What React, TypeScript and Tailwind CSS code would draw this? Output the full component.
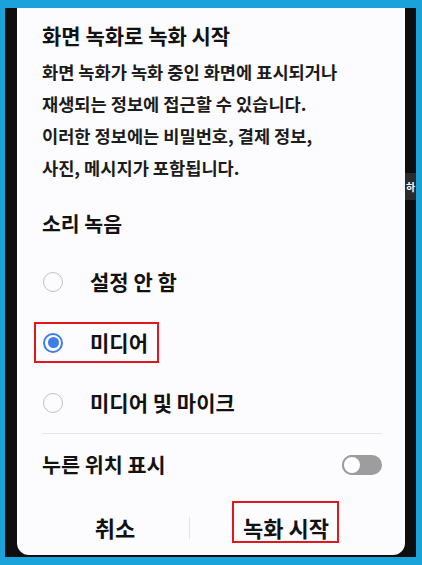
import React from "react";

const font = { fontFamily: '"Noto Sans CJK KR", "Noto Sans", sans-serif' };

function Radio({ checked }: { checked?: boolean }) {
  if (checked) {
    return (
      <div className="ml-[1px] flex h-[20px] w-[20px] items-center justify-center rounded-full border-2 border-[#3e7ee8]">
        <div className="h-[11px] w-[11px] rounded-full bg-[#3e7ee8]" />
      </div>
    );
  }
  return <div className="ml-[1px] h-[20px] w-[20px] rounded-full border-[1.5px] border-[#c2c2c2]" />;
}

export default function App() {
  return (
    <div
      className="relative h-[565px] w-[422px] overflow-hidden bg-[#1aa2da] pl-[5px] pt-[8px]"
      style={font}
    >
      <div className="h-[549px] w-[411px] bg-[#0e0e0e] px-[12px]">
        <div className="flex h-[547px] w-[388px] flex-col overflow-hidden rounded-b-[12px] bg-[#fcfcfe] text-[#121212]">
          <div className="pl-[25px] pr-[23px]">
            <div className="mt-[13px] text-[21px] font-bold leading-[28px]">화면 녹화로 녹화 시작</div>
            <div className="mt-[7px] text-[17.6px] font-bold leading-[32px] text-[#1c1c1c]">
              <div>화면 녹화가 녹화 중인 화면에 표시되거나</div>
              <div>재생되는 정보에 접근할 수 있습니다.</div>
              <div>이러한 정보에는 비밀번호, 결제 정보,</div>
              <div>사진, 메시지가 포함됩니다.</div>
            </div>
            <div className="mt-[25px] text-[20.5px] font-bold leading-[28px]">소리 녹음</div>
            <div className="mt-[15px]">
              <div className="flex h-[60px] items-center">
                <Radio />
                <span className="ml-[27px] text-[21px] font-bold">설정 안 함</span>
              </div>
              <div className="relative flex h-[61px] items-center">
                <Radio checked />
                <span className="ml-[27px] text-[21px] font-bold">미디어</span>
                <div className="absolute left-[-8px] top-[10px] h-[41px] w-[125px] border-2 border-[#e3161d]" />
              </div>
              <div className="flex h-[60px] items-center">
                <Radio />
                <span className="ml-[27px] text-[21px] font-bold">미디어 및 마이크</span>
              </div>
            </div>
            <div className="h-px bg-[#e6e6e8]" />
            <div className="flex h-[62px] items-center justify-between">
              <span className="text-[20.7px] font-bold">누른 위치 표시</span>
              <div className="relative h-[20px] w-[40px] rounded-full bg-[#9d9d9d]">
                <div className="absolute left-0 top-0 h-[20px] w-[20px] rounded-full border-2 border-[#9d9d9d] bg-white" />
              </div>
            </div>
          </div>
          <div className="flex h-[59px] items-center pt-[4px]">
            <div className="flex w-[172px] justify-center pl-[24px] text-[22px] font-bold">취소</div>
            <div className="h-[22px] w-px bg-[#e4e4e6]" />
            <div className="relative ml-[53px] text-[22px] font-bold">
              녹화 시작
              <div className="absolute left-[-11px] top-[-10px] h-[42px] w-[107px] border-2 border-[#e3161d]" />
            </div>
          </div>
        </div>
      </div>
      <div className="absolute left-[405px] top-[173px] flex h-[27px] w-[11px] items-center justify-center bg-[#2b2b2b]">
        <span className="text-[10px] font-bold leading-[12px] text-white">하</span>
      </div>
    </div>
  );
}
